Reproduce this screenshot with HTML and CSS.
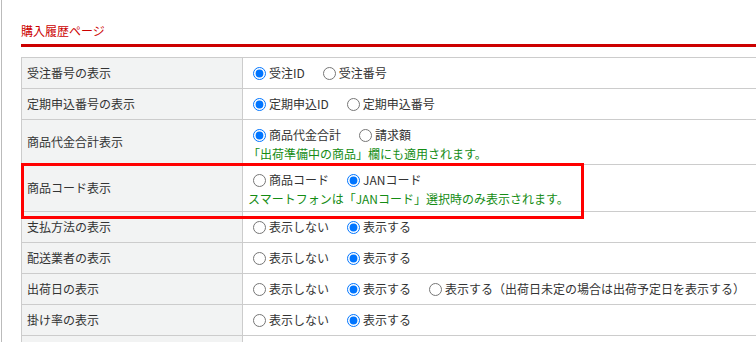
FILE: index.html
```html
<!DOCTYPE html>
<html lang="ja">
<head>
    <meta charset="utf-8">
    <title>購入履歴ページ</title>
    <link rel="stylesheet" href="styles.css">
</head>
<body>
<div class="page">
    <div class="content">
        <h2 class="ttl">購入履歴ページ</h2>
        <table class="setting" cellspacing="0" cellpadding="0">
            <tr>
                <th>受注番号の表示</th>
                <td>
                    <div class="opts">
                        <label><input type="radio" name="r1" checked>受注ID</label>
                        <label><input type="radio" name="r1">受注番号</label>
                    </div>
                </td>
            </tr>
            <tr>
                <th>定期申込番号の表示</th>
                <td>
                    <div class="opts">
                        <label><input type="radio" name="r2" checked>定期申込ID</label>
                        <label><input type="radio" name="r2">定期申込番号</label>
                    </div>
                </td>
            </tr>
            <tr class="has-note">
                <th>商品代金合計表示</th>
                <td>
                    <div class="opts">
                        <label><input type="radio" name="r3" checked>商品代金合計</label>
                        <label><input type="radio" name="r3">請求額</label>
                    </div>
                    <p class="note">「出荷準備中の商品」欄にも適用されます。</p>
                </td>
            </tr>
            <tr class="has-note mark">
                <th>商品コード表示</th>
                <td>
                    <div class="opts">
                        <label><input type="radio" name="r4">商品コード</label>
                        <label><input type="radio" name="r4" checked>JANコード</label>
                    </div>
                    <p class="note">スマートフォンは「JANコード」選択時のみ表示されます。</p>
                </td>
            </tr>
            <tr>
                <th>支払方法の表示</th>
                <td>
                    <div class="opts">
                        <label><input type="radio" name="r5">表示しない</label>
                        <label><input type="radio" name="r5" checked>表示する</label>
                    </div>
                </td>
            </tr>
            <tr>
                <th>配送業者の表示</th>
                <td>
                    <div class="opts">
                        <label><input type="radio" name="r6">表示しない</label>
                        <label><input type="radio" name="r6" checked>表示する</label>
                    </div>
                </td>
            </tr>
            <tr>
                <th>出荷日の表示</th>
                <td>
                    <div class="opts">
                        <label><input type="radio" name="r7">表示しない</label>
                        <label><input type="radio" name="r7" checked>表示する</label>
                        <label><input type="radio" name="r7">表示する（出荷日未定の場合は出荷予定日を表示する）</label>
                    </div>
                </td>
            </tr>
            <tr>
                <th>掛け率の表示</th>
                <td>
                    <div class="opts">
                        <label><input type="radio" name="r8">表示しない</label>
                        <label><input type="radio" name="r8" checked>表示する</label>
                    </div>
                </td>
            </tr>
            <tr>
                <th>&nbsp;</th>
                <td>&nbsp;</td>
            </tr>
        </table>
    </div>
</div>
</body>
</html>
```

FILE: styles.css
```css
* {
    margin: 0;
    padding: 0;
    box-sizing: border-box;
}
html, body {
    height: 100%;
    overflow: hidden;
}
body {
    font-family: "Noto Sans CJK JP", "Liberation Sans", sans-serif;
    font-size: 12px;
    color: #333;
    background-color: #fff;
}
.page {
    min-height: 100%;
    margin-left: 1px;
    border-left: 1px solid #bbb;
}
.content {
    width: 820px;
    padding: 22px 0 0 19px;
}
.ttl {
    font-size: 12px;
    font-weight: normal;
    line-height: 18px;
    color: #cc0000;
    padding-bottom: 4px;
    border-bottom: 3px solid #cc0000;
    margin-bottom: 10px;
}
.setting {
    width: 100%;
    border-collapse: collapse;
    border: 1px solid #ccc;
}
.setting th,
.setting td {
    border: 1px solid #ccc;
    padding: 5px;
    line-height: 20px;
    text-align: left;
    font-weight: normal;
    vertical-align: middle;
}
.setting th {
    width: 221px;
    background-color: #f2f3f3;
}
.setting td {
    vertical-align: top;
}
.opts {
    display: flex;
    align-items: center;
    white-space: nowrap;
}
.opts label {
    display: flex;
    align-items: center;
    margin-right: 13px;
}
.opts input {
    width: 13px;
    height: 13px;
    margin: 0 3px 0 5px;
}
.note {
    color: #148c14;
    line-height: 17px;
}
.has-note td {
    padding-bottom: 2px;
}
.mark td {
    padding-bottom: 4px;
}
.mark th {
    position: relative;
}
.mark th:after {
    content: "";
    position: absolute;
    left: -1px;
    top: -2px;
    width: 557px;
    height: 50px;
    border: 3px solid #f00;
}
```
